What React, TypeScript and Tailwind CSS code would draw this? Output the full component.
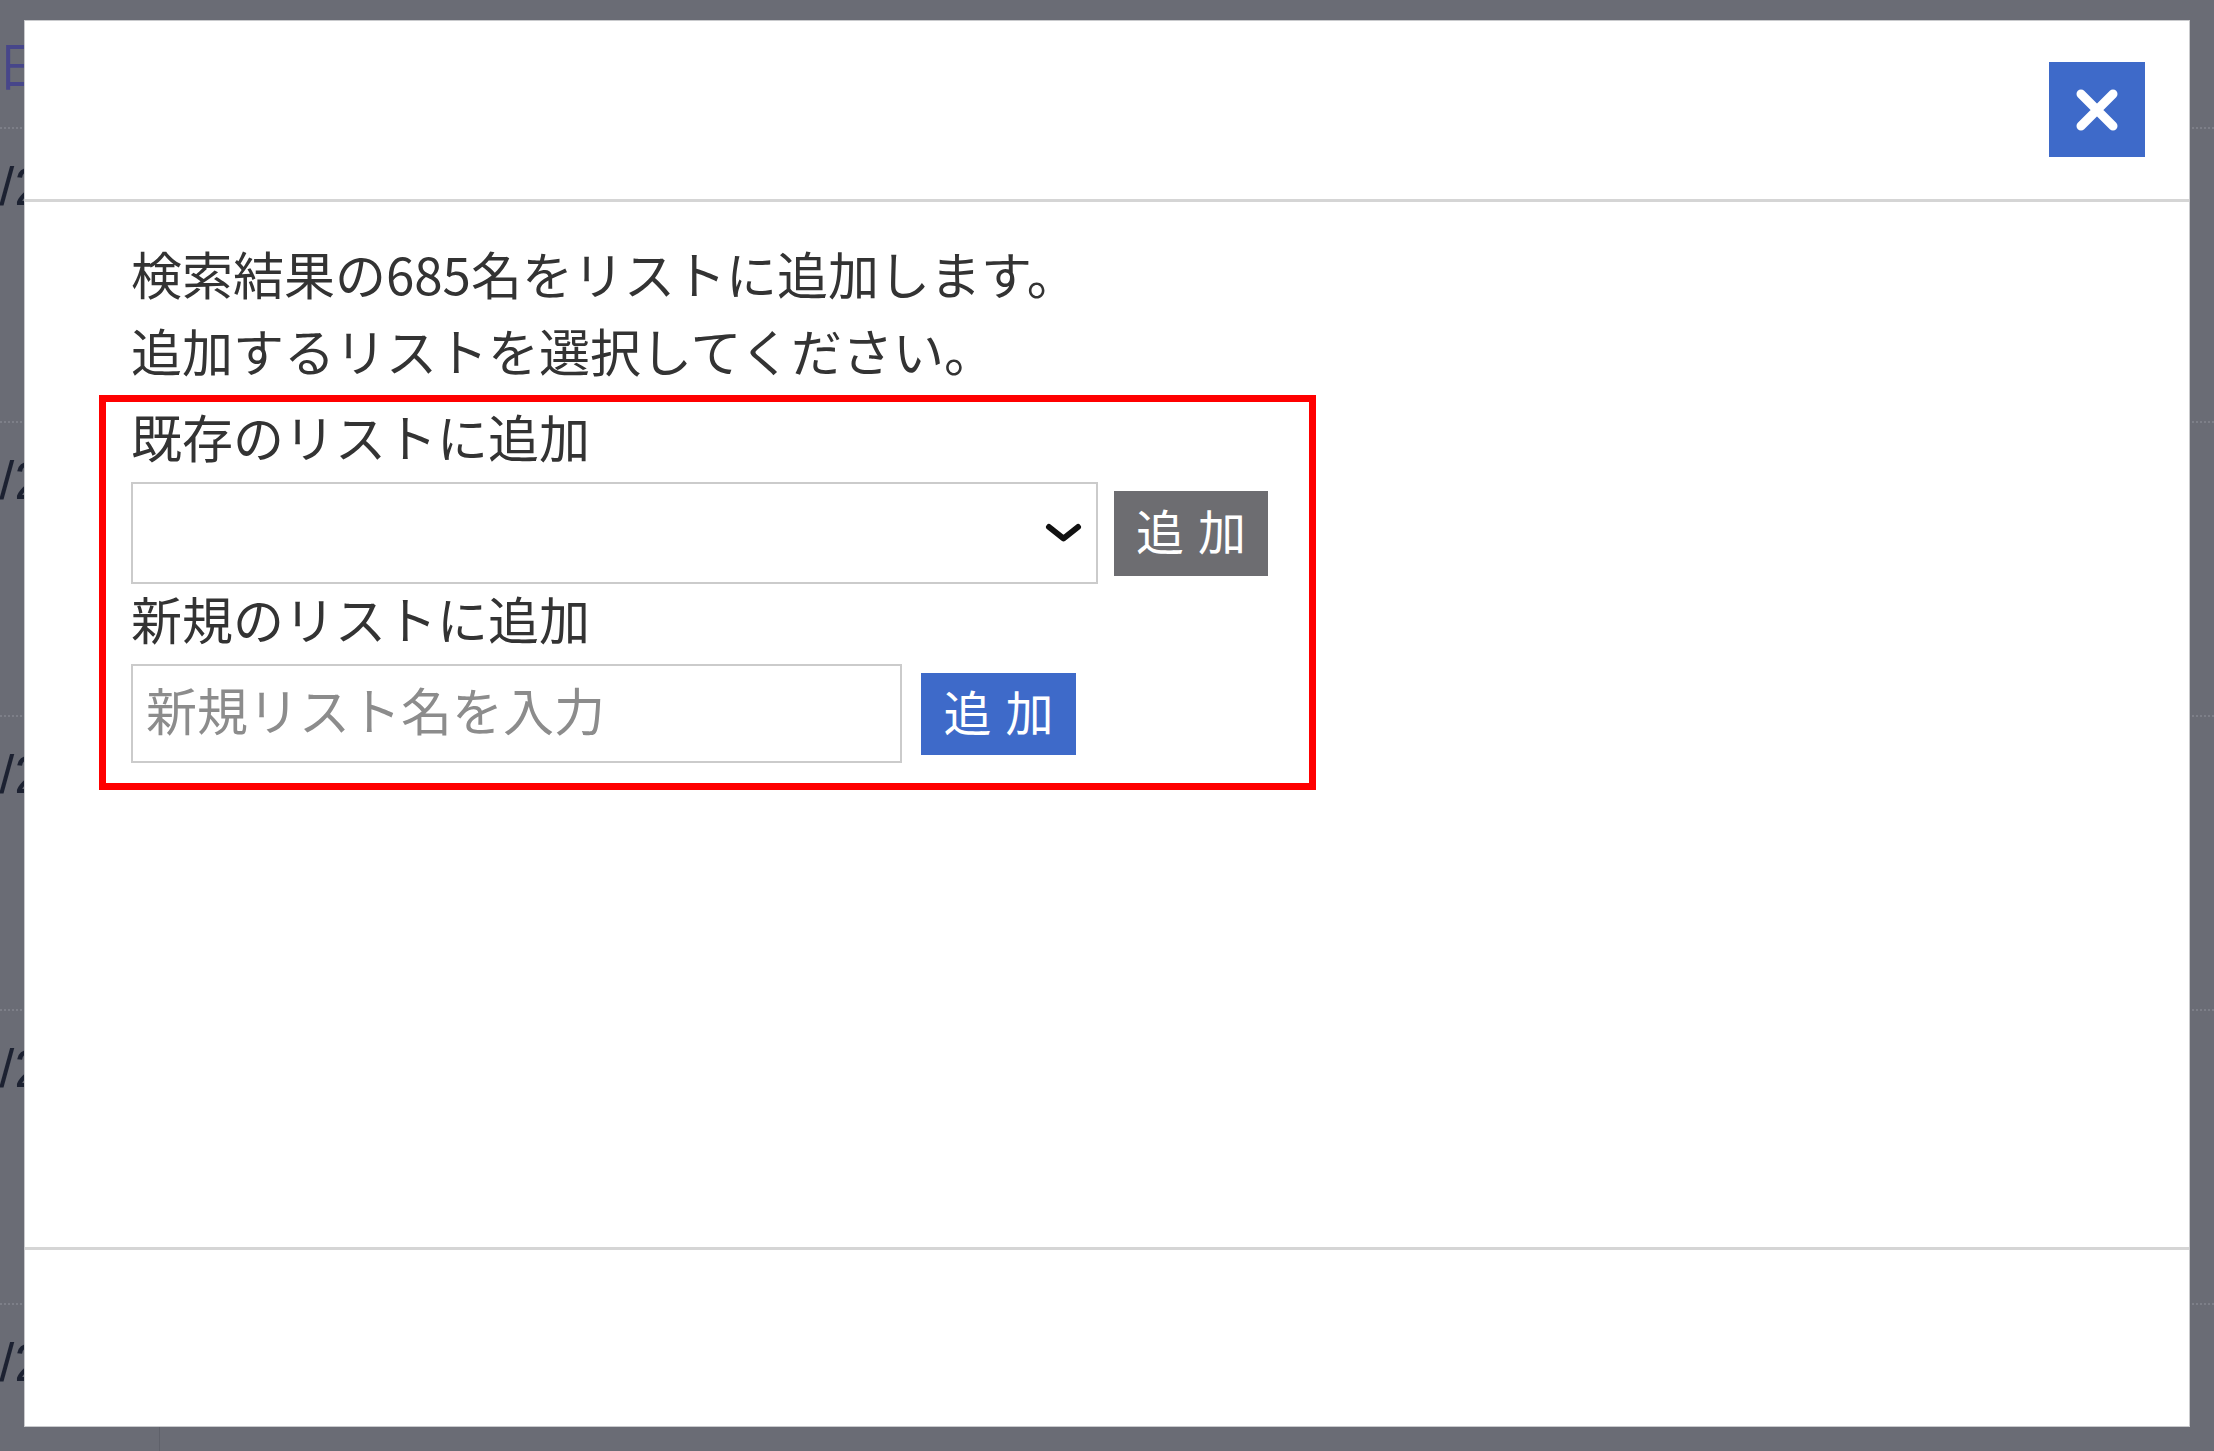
import React from "react";

const rows = [0, 1, 2, 3, 4];

export default function App() {
  return (
    <div className="relative w-[2214px] h-[1451px] overflow-hidden bg-[#6a6c75] font-['Noto_Sans_CJK_JP',sans-serif]">
      {/* dimmed background page */}
      <div className="flex flex-col w-full">
        <div className="h-[129px] border-b-2 border-dotted border-[#7d7f88] pt-[38px]">
          <div className="-ml-[3px] text-[52px] leading-[52px] text-[#47468a] font-['Noto_Sans_CJK_JP',sans-serif]">
            日付
          </div>
        </div>
        {rows.map((r) => (
          <div
            key={r}
            className="flex h-[294px] border-b-2 border-dotted border-[#7d7f88]"
          >
            <div className="w-[160px] border-r border-[#5f616a] pt-[30px]">
              <div className="-ml-[121px] whitespace-nowrap text-[54px] leading-[54px] text-[#1c2131] font-['Liberation_Sans',sans-serif]">
                2022/2
              </div>
            </div>
            <div className="flex-1" />
          </div>
        ))}
      </div>

      {/* modal */}
      <div className="absolute left-[24px] top-[20px] w-[2166px] h-[1407px] bg-white border border-[#c9cacd] flex flex-col">
        <div className="h-[181px] border-b-[3px] border-[#d5d5d5] flex justify-end items-start pt-[41px] pr-[44px]">
          <button className="w-[96px] h-[95px] bg-[#3e6ac9] flex items-center justify-center">
            <svg width="44" height="44" viewBox="0 0 44 44">
              <path
                d="M6 6 L38 38 M38 6 L6 38"
                stroke="#ffffff"
                strokeWidth="9"
                strokeLinecap="round"
                fill="none"
              />
            </svg>
          </button>
        </div>

        <div className="flex-1 pl-[106px] pt-[33px] text-[#333333]">
          <p className="text-[51px] leading-[77px] whitespace-nowrap">
            検索結果の685名をリストに追加します。
          </p>
          <p className="text-[51px] leading-[77px] whitespace-nowrap">
            追加するリストを選択してください。
          </p>

          <div className="mt-[6px] -ml-[32px] w-[1217px] border-[7px] border-[#ff0000] pl-[25px] pt-[4px] pb-[20px]">
            <div className="text-[51px] leading-[60px] whitespace-nowrap">
              既存のリストに追加
            </div>
            <div className="mt-[16px] flex items-center gap-[16px]">
              <div className="relative w-[967px] h-[102px]">
                <select className="appearance-none w-full h-full bg-white border-2 border-[#cbcbcb] outline-none text-[48px]">
                  <option value=""></option>
                </select>
                <svg
                  className="absolute right-[16px] top-[41px]"
                  width="37"
                  height="20"
                  viewBox="0 0 37 20"
                >
                  <polyline
                    points="4,4 18.5,15.5 33,4"
                    stroke="#111111"
                    strokeWidth="6"
                    fill="none"
                    strokeLinecap="round"
                    strokeLinejoin="round"
                  />
                </svg>
              </div>
              <button className="w-[154px] h-[85px] pb-[8px] bg-[#6d6d71] text-white text-[48px] leading-[48px] flex items-center justify-center gap-[14px]">
                <span>追</span>
                <span>加</span>
              </button>
            </div>

            <div className="mt-[4px] text-[51px] leading-[60px] whitespace-nowrap">
              新規のリストに追加
            </div>
            <div className="mt-[16px] flex items-center gap-[19px]">
              <input
                type="text"
                placeholder="新規リスト名を入力"
                className="w-[771px] h-[99px] border-2 border-[#cbcbcb] pl-[13px] pb-[10px] text-[51px] outline-none placeholder:text-[#8c8c8c] font-['Noto_Sans_CJK_JP',sans-serif]"
              />
              <button className="w-[155px] h-[82px] pb-[8px] bg-[#3e6ac9] text-white text-[48px] leading-[48px] flex items-center justify-center gap-[14px]">
                <span>追</span>
                <span>加</span>
              </button>
            </div>
          </div>
        </div>

        <div className="h-[179px] border-t-[3px] border-[#d5d5d5]" />
      </div>
    </div>
  );
}
